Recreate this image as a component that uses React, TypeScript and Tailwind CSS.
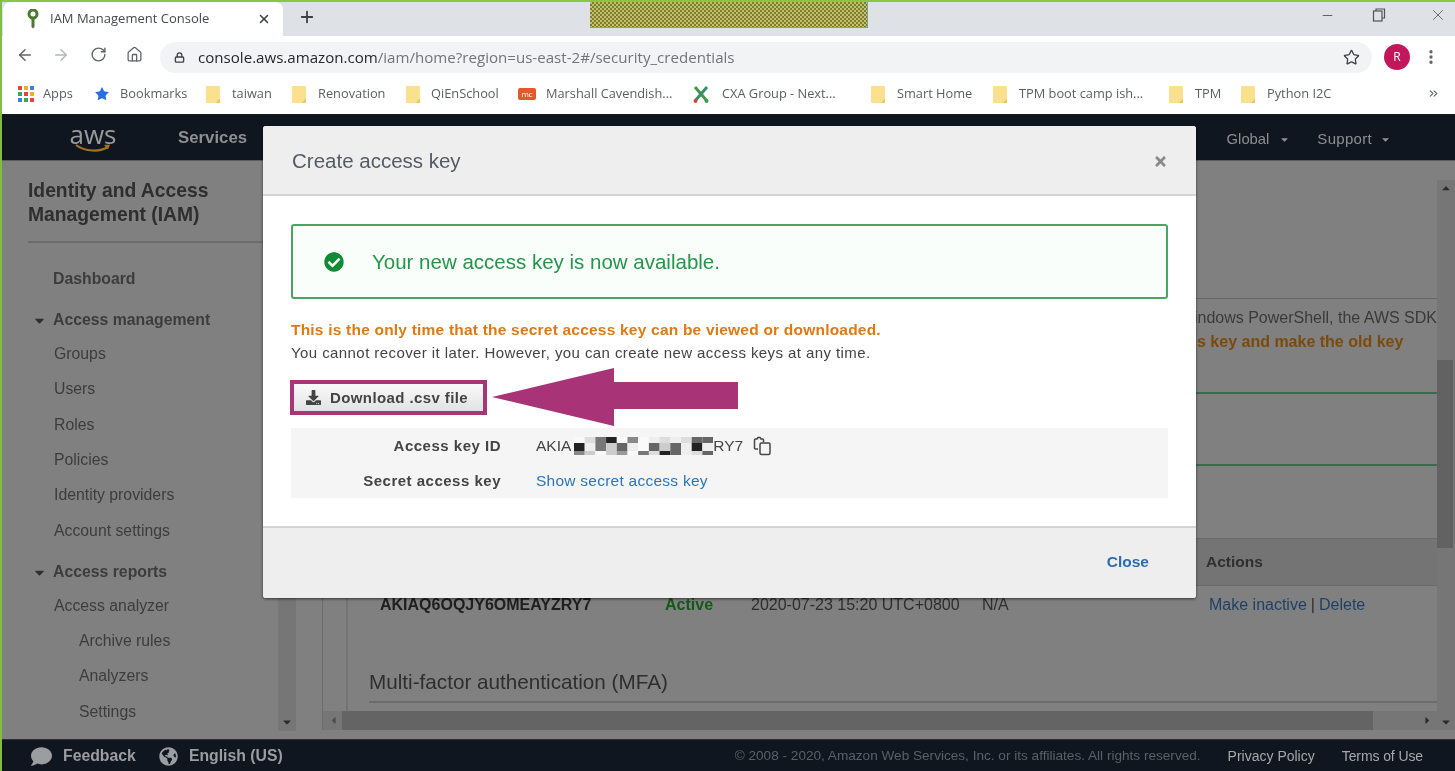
import { ArrowLeft, ArrowRight, ChevronsRight, House, Lock, Minus, MoreVertical, Plus, RotateCw, Star, X } from 'lucide-react';
import { FaCaretDown, FaCaretLeft, FaCaretRight, FaCaretUp, FaCheckCircle, FaComment, FaDownload, FaGlobeAmericas, FaTimes } from 'react-icons/fa';

const Folder = () => (
  <svg width="14" height="18" viewBox="0 0 14 18" className="shrink-0">
    <path d="M0 1h13a1 1 0 0 1 1 1v15a1 1 0 0 1-1 1H1a1 1 0 0 1-1-1z" fill="#fbe08d" />
    <path d="M10 18l4-5v4a1 1 0 0 1-1 1z" fill="#e9c86a" />
  </svg>
);

const AppsIcon = () => {
  const colors = ['#e0483e', '#f2b01e', '#3b82d8', '#3aa757', '#e0483e', '#f2b01e', '#3b82d8', '#3aa757', '#e0483e'];
  return (
    <div className="grid grid-cols-3 gap-[2px] w-[16px] shrink-0">
      {colors.map((c, i) => (
        <div key={i} className="h-[4px] w-[4px]" style={{ background: c }} />
      ))}
    </div>
  );
};

const Bookmark = ({ icon, label, className }: { icon: React.ReactNode; label: string; className: string }) => (
  <div className={`flex items-center whitespace-nowrap ${className}`}>
    {icon}
    <span>{label}</span>
  </div>
);

const pixels = [
  ['#f8f8f8', '#222222', '#888888'],
  ['#dddddd', '#eeeeee', '#cccccc'],
  ['#777777', '#777777', '#f8f8f8'],
  ['#222222', '#cccccc', '#cccccc'],
  ['#fafafa', '#666666', '#999999'],
  ['#888888', '#eeeeee', '#fafafa'],
  ['#fafafa', '#fafafa', '#777777'],
  ['#eeeeee', '#666666', '#dddddd'],
  ['#dddddd', '#cccccc', '#222222'],
  ['#eeeeee', '#666666', '#666666'],
  ['#dddddd', '#eeeeee', '#eeeeee'],
  ['#666666', '#222222', '#dddddd'],
  ['#666666', '#eeeeee', '#666666'],
];

const Redacted = () => (
  <svg width="139" height="18" viewBox="0 0 139 18" className="ml-[3px] shrink-0">
    {pixels.map((col, i) => (
      <g key={i}>
        <rect x={i * 10.7} y="0" width="10.7" height="6" fill={col[0]} />
        <rect x={i * 10.7} y="6" width="10.7" height="8" fill={col[1]} />
        <rect x={i * 10.7} y="14" width="10.7" height="4" fill={col[2]} />
      </g>
    ))}
  </svg>
);

const SideItem = ({ label, kind = 'item' }: { label: string; kind?: 'item' | 'sub' | 'head' | 'top' }) => (
  <div
    className={`flex items-center whitespace-nowrap ${
      kind === 'sub'
        ? 'h-[35.3px] pl-[77px] font-normal'
        : kind === 'item'
          ? 'h-[35.3px] pl-[52px]'
          : kind === 'head'
            ? 'h-[32px] pl-[51px] font-bold'
            : 'h-[35.3px] pl-[51px] font-bold'
    }`}
  >
    {kind === 'head' && <FaCaretDown className="-ml-[21px] mr-[6px] text-[15px] text-[#2f2f2f]" />}
    {label}
  </div>
);

export default function App() {
  return (
    <div className="relative flex h-[771px] w-[1455px] flex-col overflow-hidden border-l-2 border-[#7fbf3f] bg-[#808080] font-['Liberation_Sans',sans-serif] blur-[0.5px]">
      {/* browser tab strip */}
      <div className="flex h-[36px] shrink-0 items-start border-t-2 border-[#8cc63f] bg-[#dee1e6]">
        <div className="ml-px flex h-[34px] w-[280px] items-center rounded-t-lg bg-white pl-[24px] pr-[12px] font-['Open_Sans',sans-serif] text-[13px] text-[#45494e]">
          <svg width="12" height="20" viewBox="0 0 12 20" className="mr-[11px] shrink-0">
            <circle cx="6" cy="5" r="4" fill="none" stroke="#4c7a34" strokeWidth="3" />
            <path d="M4.5 9h3v9l-1.5 1.5L4.500 18z" fill="#4c7a34" />
          </svg>
          <span className="flex-1 whitespace-nowrap">IAM Management Console</span>
          <X size={14} strokeWidth={2.6} className="text-[#3c4043]" />
        </div>
        <Plus size={18} strokeWidth={2.4} className="ml-[15px] mt-[6px] text-[#3c4043]" />
        <div className="ml-[274px] h-[26px] w-[278px] border-b border-r border-[#6fa88f] bg-[repeating-conic-gradient(#7f7d34_0_25%,#c3c168_0_50%)] bg-[length:4px_4px]" />
        <div className="ml-auto flex items-center pr-[5px] pt-[4px] text-[#5f6368]">
          <Minus size={15} strokeWidth={1.6} className="mr-[37px]" />
          <svg width="14" height="14" viewBox="0 0 14 14" fill="none" stroke="#4f5357" strokeWidth="1.2" className="mr-[43px]">
            <path d="M4 3V1h8.500v9H10" />
            <rect x="1.500" y="3" width="8.500" height="10" />
          </svg>
          <X size={18} strokeWidth={1.2} className="mr-[3px]" />
        </div>
      </div>

      {/* toolbar */}
      <div className="flex h-[37px] shrink-0 items-center bg-white text-[#5f6368]">
        <ArrowLeft size={18} strokeWidth={2} className="ml-[14px]" />
        <ArrowRight size={18} strokeWidth={2} className="ml-[18px] text-[#b4b7bb]" />
        <RotateCw size={17} strokeWidth={2} className="ml-[20px]" />
        <House size={17} strokeWidth={1.8} className="ml-[19px]" />
        <div className="ml-[17px] mt-[5px] flex h-[31px] w-[1212px] items-center rounded-full bg-[#f1f3f4] pl-[14px] pr-[12px] font-['Open_Sans',sans-serif] text-[15.1px]">
          <Lock size={11} strokeWidth={3} className="mr-[13px] text-[#3f4347]" />
          <span className="flex-1 whitespace-nowrap text-[#70757a]">
            <span className="text-[#25282b]">console.aws.amazon.com</span>/iam/home?region=us-east-2#/security_credentials
          </span>
          <Star size={17} strokeWidth={1.8} className="text-[#3c4043]" />
        </div>
        <div className="ml-[12px] mt-[5px] flex h-[26px] w-[26px] items-center justify-center rounded-full bg-[#c2185b] font-['Open_Sans',sans-serif] text-[12px] text-white">
          R
        </div>
        <MoreVertical size={18} strokeWidth={2.4} className="ml-[12px] mt-[4px]" />
      </div>

      {/* bookmarks bar */}
      <div className="flex h-[42px] shrink-0 items-center border-b border-[#1a1a1a] bg-white pl-[16px] font-['Open_Sans',sans-serif] text-[12.8px] text-[#5a5e63]">
        <Bookmark className="w-[76px] gap-[9px]" icon={<AppsIcon />} label="Apps" />
        <Bookmark className="w-[112px] gap-[10px]" icon={<Star size={16} fill="#2a6fdb" strokeWidth={0} />} label="Bookmarks" />
        <Bookmark className="w-[86px] gap-[12px]" icon={<Folder />} label="taiwan" />
        <Bookmark className="w-[114px] gap-[12px]" icon={<Folder />} label="Renovation" />
        <Bookmark className="w-[112px] gap-[11px]" icon={<Folder />} label="QiEnSchool" />
        <Bookmark
          className="w-[175px] gap-[10px]"
          icon={
            <div className="flex h-[12px] w-[18px] items-center justify-center rounded-[2px] bg-[#e2592a] text-[8px] leading-none text-white">
              mc
            </div>
          }
          label="Marshall Cavendish..."
        />
        <Bookmark
          className="w-[178px] gap-[13px]"
          icon={
            <svg width="16" height="18" viewBox="0 0 16 18" className="shrink-0">
              <path d="M2 2l12 14" stroke="#3f9a4a" strokeWidth="3" />
              <path d="M14 2L2 16" stroke="#3a8f6a" strokeWidth="3" />
              <circle cx="2.500" cy="16" r="2" fill="#d8433a" />
              <circle cx="13.500" cy="16" r="2" fill="#3f9a4a" />
            </svg>
          }
          label="CXA Group - Next..."
        />
        <Bookmark className="w-[122px] gap-[12px]" icon={<Folder />} label="Smart Home" />
        <Bookmark className="w-[176px] gap-[12px]" icon={<Folder />} label="TPM boot camp ish..." />
        <Bookmark className="w-[72px] gap-[12px]" icon={<Folder />} label="TPM" />
        <Bookmark className="flex-1 gap-[12px]" icon={<Folder />} label="Python I2C" />
        <ChevronsRight size={13} strokeWidth={2} className="mr-[15px] text-[#5f6368]" />
      </div>

      {/* aws nav, dimmed by the modal backdrop */}
      <div className="flex h-[45px] shrink-0 items-center bg-[#10161f] text-[#8d8f92]">
        <div className="ml-[68px] flex w-[46px] flex-col items-center">
          <span className="font-['Open_Sans',sans-serif] text-[26px] leading-[22px] text-[#9a9a9a]">aws</span>
          <svg width="40" height="9" viewBox="0 0 36 9" className="-mt-[1px]">
            <path d="M1 1c9 7 24 7 32 2" fill="none" stroke="#a6721f" strokeWidth="2.200" />
            <path d="M29 1l6-.5-2 5z" fill="#a6721f" />
          </svg>
        </div>
        <span className="ml-[62px] text-[16.8px] font-bold">Services</span>
        <div className="ml-auto flex items-center pr-[64px] pt-[4px] text-[14.8px]">
          <span>Global</span>
          <FaCaretDown className="ml-[10px] text-[11px]" />
          <span className="ml-[27px] text-[15px] tracking-[0.3px]">Support</span>
          <FaCaretDown className="ml-[8px] text-[11px]" />
        </div>
      </div>

      {/* console body */}
      <div className="flex min-h-0 flex-1 border-t border-[#5d5d5d]">
        <div className="w-[276px] shrink-0 text-[15.8px] text-[#3c3c3c]">
          <div className="ml-[26px] mt-[18px] border-b-2 border-[#6b6b6b] pb-[14px] text-[19.3px] font-bold leading-[24px] text-[#2e2e2e]">
            Identity and Access
            <br />
            Management (IAM)
          </div>
          <div className="mt-[18px]">
            <SideItem kind="top" label="Dashboard" />
          </div>
          <div className="mt-[8px]">
            <SideItem kind="head" label="Access management" />
            <SideItem label="Groups" />
            <SideItem label="Users" />
            <SideItem label="Roles" />
            <SideItem label="Policies" />
            <SideItem label="Identity providers" />
            <SideItem label="Account settings" />
          </div>
          <div className="mt-[8px]">
            <SideItem kind="head" label="Access reports" />
            <SideItem label="Access analyzer" />
            <SideItem kind="sub" label="Archive rules" />
            <SideItem kind="sub" label="Analyzers" />
            <SideItem kind="sub" label="Settings" />
          </div>
        </div>
        <div className="mb-[8px] mt-[19px] flex w-[18px] shrink-0 items-end justify-center bg-[#767676] pb-[3px]">
          <FaCaretDown className="text-[12px] text-[#2b2b2b]" />
        </div>

        <div className="ml-[26px] flex min-w-0 flex-1 flex-col">
          <div className="flex min-h-0 flex-1 border-l border-[#6c6c6c]">
            <div className="w-[23px] shrink-0" />
            <div className="flex min-w-0 flex-1 flex-col border-l-2 border-[#737373] text-[16px] text-[#333333]">
              <div className="mt-[137px] border-b border-[#666666]" />
              <div className="mt-[7px] flex h-[24px] items-center justify-end overflow-hidden whitespace-nowrap text-[#3a3a3a]">
                Windows PowerShell, the AWS SDK
              </div>
              <div className="flex h-[24px] items-center overflow-hidden whitespace-nowrap pl-[849px] font-bold text-[#7a4a0a]">
                s key and make the old key
              </div>
              <div className="mt-[38px] border-b-2 border-[#3c6a4a]" />
              <div className="mt-[70px] border-b-2 border-[#3c6a4a]" />
              <div className="mt-[72px] flex h-[48px] items-center border-y border-[#6a6a6a] bg-[#747474] pl-[858px] text-[15.5px] font-bold text-[#2f2f2f]">
                Actions
              </div>
              <div className="flex h-[38px] items-center whitespace-nowrap">
                <span className="ml-[32px] w-[285px] font-bold text-[#1f1f1f]">AKIAQ6OQJY6OMEAYZRY7</span>
                <span className="w-[86px] font-bold text-[#135a1a]">Active</span>
                <span className="w-[231px] text-[#2e2e2e]">2020-07-23 15:20 UTC+0800</span>
                <span className="w-[227px] text-[#2e2e2e]">N/A</span>
                <span className="text-[#1f4066]">Make inactive</span>
                <span className="mx-[4px] text-[#2e2e2e]">|</span>
                <span className="text-[#1f4066]">Delete</span>
              </div>
              <div className="ml-[21px] mt-[45px] border-b-2 border-[#6b6b6b] pb-[6px] text-[20.7px] leading-[26px] text-[#2e2e2e]">
                Multi-factor authentication (MFA)
              </div>
            </div>
          </div>
          <div className="mb-[9px] flex h-[19px] shrink-0 items-center border-l border-[#6c6c6c] bg-[#767676] pl-[5px]">
            <FaCaretLeft className="text-[11px] text-[#4a4a4a]" />
            <div className="ml-[3px] h-full w-[1031px] bg-[#646464]" />
            <FaCaretRight className="ml-[49px] text-[11px] text-[#2b2b2b]" />
          </div>
        </div>

        <div className="relative mt-[19px] mb-[9px] flex w-[18px] shrink-0 flex-col items-center justify-between bg-[#767676] py-[2px]">
          <FaCaretUp className="text-[12px] text-[#2b2b2b]" />
          <FaCaretDown className="text-[12px] text-[#2b2b2b]" />
          <div className="absolute left-0 top-[180px] h-[188px] w-[16px] bg-[#626262]" />
        </div>
      </div>

      {/* footer */}
      <div className="flex h-[32px] shrink-0 items-center border-t border-[#2b3036] bg-[#10161f] pt-[1px] text-[15.8px] font-bold text-[#9b9da0]">
        <FaComment className="ml-[29px] mr-[11px] text-[21px]" />
        <span>Feedback</span>
        <FaGlobeAmericas className="ml-[23px] mr-[11px] text-[19px]" />
        <span>English (US)</span>
        <span className="ml-auto text-[13.6px] font-normal text-[#5a6068]">
          © 2008 - 2020, Amazon Web Services, Inc. or its affiliates. All rights reserved.
        </span>
        <span className="ml-[27px] text-[14px] font-normal text-[#a5a7aa]">Privacy Policy</span>
        <span className="ml-[27px] mr-[32px] text-[14px] font-normal tracking-[-0.1px] text-[#a5a7aa]">Terms of Use</span>
      </div>

      {/* modal */}
      <div className="absolute left-[261px] top-[126px] flex h-[472px] w-[933px] flex-col overflow-hidden rounded-[3px] bg-white text-[15px] text-[#444444] shadow-[0_1px_3px_rgba(0,0,0,0.6)]">
        <div className="flex h-[70px] shrink-0 items-center justify-between border-b-2 border-[#d4d4d4] bg-[#eeeeee] pl-[29px] pr-[28px] pt-[2px]">
          <span className="text-[20.5px] text-[#545b64]">Create access key</span>
          <FaTimes className="text-[15px] text-[#8a8a8a]" />
        </div>
        <div className="flex-1 px-[28px] pt-[28px]">
          <div className="flex h-[75px] items-center rounded-[3px] border-2 border-[#4aa564] bg-[#f9fefb] pl-[31px] pt-[1px] text-[20.5px] text-[#23964a]">
            <FaCheckCircle className="mr-[28px] text-[20px] text-[#0f8a35]" />
            Your new access key is now available.
          </div>
          <div className="mt-[21px] text-[15.5px] font-bold leading-[20px] tracking-[0.21px] text-[#dd7a12]">
            This is the only time that the secret access key can be viewed or downloaded.
          </div>
          <div className="mt-[3px] text-[15px] leading-[20px] tracking-[0.42px]">
            You cannot recover it later. However, you can create new access keys at any time.
          </div>
          <div className="-ml-px mt-[17px] w-[197px] border-[4px] border-[#a83676]">
            <div className="flex h-[27px] items-center bg-gradient-to-b from-[#fafafa] to-[#e2e2e2] pl-[12px] pt-[2px] text-[15px] font-bold tracking-[0.4px] text-[#444444]">
              <FaDownload className="mr-[9px] -mt-[3px] text-[15px]" />
              Download .csv file
            </div>
          </div>
          <div className="mt-[13px] flex h-[70px] flex-col justify-center gap-[17px] bg-[#f5f5f5] pt-[1px] text-[15px]">
            <div className="flex h-[18px] items-center">
              <span className="w-[210px] text-right font-bold tracking-[0.5px]">Access key ID</span>
              <span className="ml-[35px] text-[15.5px]">AKIA</span>
              <Redacted />
              <span className="text-[15.5px]">RY7</span>
              <svg width="20" height="20" viewBox="0 0 20 20" fill="none" stroke="#444444" strokeWidth="1.500" className="ml-[9px]">
                <path d="M6 13H3.500a1 1 0 0 1-1-1V4a1 1 0 0 1 1-1H5l1-1.500h2L9 3h1.500a1 1 0 0 1 1 1v2" />
                <rect x="8" y="7" width="10" height="11.500" rx="1.500" />
              </svg>
            </div>
            <div className="flex h-[18px] items-center">
              <span className="w-[210px] text-right font-bold tracking-[0.5px]">Secret access key</span>
              <span className="ml-[35px] text-[15.5px] tracking-[0.25px] text-[#2b76b8]">Show secret access key</span>
            </div>
          </div>
        </div>
        <div className="flex h-[72px] shrink-0 items-center justify-end border-t-2 border-[#d4d4d4] bg-[#eeeeee] pb-[2px] pr-[47px] text-[15.5px] font-bold text-[#2b6cb0]">
          Close
        </div>
      </div>

      {/* annotation arrow */}
      <svg width="248" height="58" viewBox="0 0 248 58" className="absolute left-[489px] top-[368px]">
        <path d="M1 29L123 0v14h124v27H123v17z" fill="#a83376" />
      </svg>
    </div>
  );
}
